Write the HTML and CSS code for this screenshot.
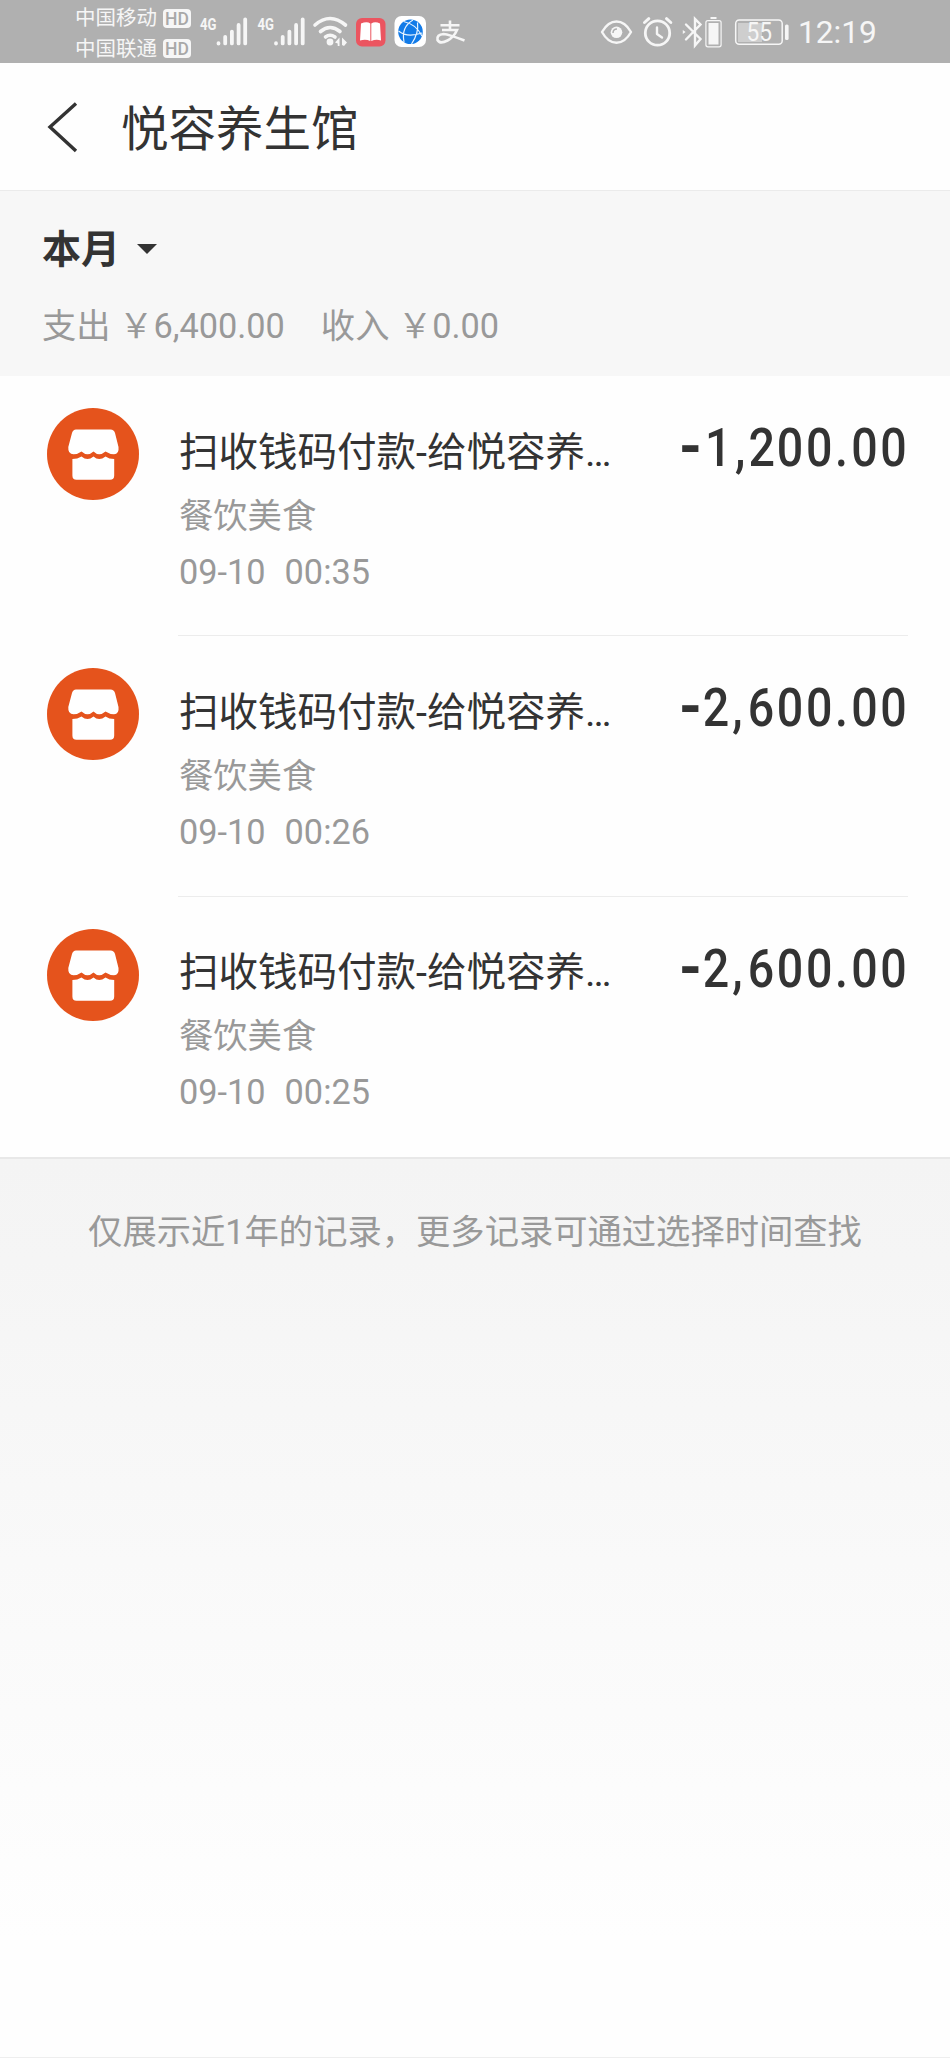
FILE: index.html
```html
<!DOCTYPE html>
<html lang="zh-CN">
<head>
<meta charset="utf-8">
<title>悦容养生馆</title>
<link rel="stylesheet" href="styles.css">
</head>
<body>
<svg class="defs" width="0" height="0">
  <symbol id="signal" viewBox="0 0 48 48">
    <g fill="none" stroke="#f6f6f6" stroke-width="3.8" stroke-linecap="round">
      <path d="M18.500 35.200v.4M25.200 28.800v6.600M31.900 23.600v11.800M38.600 17v18.400M45.200 11.300v24.100"/>
    </g>
  </symbol>
  <symbol id="shop" viewBox="0 0 92 92">
    <circle cx="46" cy="46" r="46" fill="#e5531c"/>
    <path fill="#fff" d="M29 21.500H63.500Q67 21.500 68 25L71.500 39Q72.300 46.200 67 46.200Q62.500 46.200 58.500 43.500Q52 49 46.500 43.500Q40.500 49 34.500 43.500Q31 46.200 26.500 46.200Q20.800 46.200 21.300 39L25 25Q26 21.500 29 21.500Z"/>
    <path fill="#fff" d="M25.400 51Q30.500 51 34.500 48.500Q40.500 53.500 46.500 48.500Q52 53.500 58.500 48.500Q62 51 67.200 51V67.500Q67.200 71.800 63 71.800H29.500Q25.400 71.800 25.400 67.500Z"/>
  </symbol>
</svg>

<header class="status">
  <div class="carriers">
    <div class="carrier">中国移动<span class="hd">HD</span></div>
    <div class="carrier">中国联通<span class="hd">HD</span></div>
  </div>
  <svg class="status-left" width="270" height="63" viewBox="200 0 270 63">
    <use href="#signal" x="200" y="8" width="48" height="48"/>
    <use href="#signal" x="257.500" y="8" width="48" height="48"/>
    <text class="net" x="200" y="29.500" textLength="16.500" lengthAdjust="spacingAndGlyphs">4G</text>
    <text class="net" x="257.500" y="29.500" textLength="16.500" lengthAdjust="spacingAndGlyphs">4G</text>
    <g fill="none" stroke="#f6f6f6" stroke-width="3.600" stroke-linecap="round">
      <path d="M315 25Q330 12 345.500 25M320.500 31.500Q330 23.500 340 31.500M325.500 37Q330 33.500 335 37"/>
    </g>
    <circle cx="330" cy="42" r="3.400" fill="#f6f6f6"/>
    <path fill="#f6f6f6" d="M335 42.500l4.500-5v8.500h-1.800v-2.500zM342 37.500l5 5-3 3.500-2-1z"/>
    <rect x="356" y="18" width="29.500" height="28.500" rx="6" fill="#eb5560"/>
    <path fill="#fff" d="M361 23.500Q367 21 370.300 23.500V41Q366 39 360 40.500ZM371.300 23.500Q375 21 380 23.500L381 40.500Q376 39 371.300 41Z"/>
    <rect x="394.500" y="16" width="31.500" height="31" rx="7" fill="#fff"/>
    <circle cx="410.500" cy="31.700" r="12.300" fill="#127be8"/>
    <g fill="none" stroke="#e8f4ff" stroke-width="1.200"><path d="M403.500 21.500Q416 24 422 36M413 20Q401 27 404 42M398.500 31Q407 38 422 33M417.500 22.500Q419 33 411.500 44"/></g>
    <g fill="none" stroke="#f6f6f6" stroke-width="2.600"><path d="M440.500 25.200h19M450 20.500v9.500M442 30h15Q454 37 447.500 40.500Q440 44.500 437.500 40Q436.500 34.500 443.500 34Q449 34.500 464.500 40.500"/></g>
  </svg>
  <svg class="status-right" width="200" height="63" viewBox="596 0 200 63">
    <g fill="none" stroke="#f6f6f6" stroke-width="2.400" stroke-linejoin="round" stroke-linecap="round">
      <path d="M602 32Q608 21.500 616.500 21.500Q625 21.500 631 32Q625 42.800 616.500 42.800Q608 42.800 602 32Z"/>
      <circle cx="657.500" cy="33" r="12.200" stroke-width="2.800"/>
      <path d="M657 27.500v6.500l5 3.500"/>
      <path stroke-width="3" d="M644.500 22.500l4.300-3.800M666.500 18.700l4.300 3.800"/>
      <path stroke-linejoin="miter" d="M686 24.500l14.500 14.500-5.500 6.500V19l5.500 5.500L686 39.500"/>
    </g>
    <circle cx="616.500" cy="32.300" r="5.800" fill="#f6f6f6"/>
    <path d="M613 33Q613 29 617 29" fill="none" stroke="#b0b0b0" stroke-width="1.500"/>
    <path fill="#f6f6f6" d="M682.800 30l2.800 2-2.800 2zM710.500 17h6v2h-6zM708.500 23h10v21.500h-10z"/>
    <rect x="705.900" y="20.600" width="15.200" height="26.200" rx="2" fill="none" stroke="#f6f6f6" stroke-width="1.200"/>
    <rect x="738" y="23" width="24" height="19" fill="#cecece"/>
    <rect x="735.700" y="20" width="46.500" height="24.300" rx="3.500" fill="none" stroke="#f6f6f6" stroke-width="1.500"/>
    <rect x="785" y="24.500" width="3.600" height="15.500" rx="1.500" fill="#f6f6f6"/>
    <text class="battery" x="746.500" y="40.500" textLength="25.500" lengthAdjust="spacingAndGlyphs">55</text>
  </svg>
  <time class="clock">12:19</time>
</header>

<nav class="nav">
  <svg width="34" height="54" viewBox="0 0 34 54"><path d="M32 3.500L6 27l26 24" fill="none" stroke="#333" stroke-width="3.400"/></svg>
  <h1 class="nav-title">悦容养生馆</h1>
</nav>

<section class="summary">
  <div class="month">本月<svg width="20" height="10" viewBox="0 0 20 10"><path d="M0 0h20L10 10z" fill="#333"/></svg></div>
  <div class="totals"><span>支出 ￥6,400.00</span><span>收入 ￥0.00</span></div>
</section>

<main class="list">
  <article class="item">
    <svg class="shop" width="92" height="92"><use href="#shop"/></svg>
    <div class="body">
      <div class="info"><h2>扫收钱码付款-给悦容养…</h2><p>餐饮美食</p><p class="date">09-10&nbsp; 00:35</p></div>
      <svg class="amount" width="230" height="90"><text transform="scale(.87 1)" y="57" x="2 31 65.500 81.100 113.600 147.100 180.500 199.100 232.500"><tspan class="minus" y="62">-</tspan><tspan y="57">1,200.00</tspan></text></svg>
    </div>
  </article>
  <article class="item">
    <svg class="shop" width="92" height="92"><use href="#shop"/></svg>
    <div class="body">
      <div class="info"><h2>扫收钱码付款-给悦容养…</h2><p>餐饮美食</p><p class="date">09-10&nbsp; 00:26</p></div>
      <svg class="amount" width="230" height="90"><text transform="scale(.87 1)" y="57" x="2 28.500 62.500 80.200 113.600 147.100 180.500 199.100 232.500"><tspan class="minus" y="62">-</tspan><tspan y="57">2,600.00</tspan></text></svg>
    </div>
  </article>
  <article class="item">
    <svg class="shop" width="92" height="92"><use href="#shop"/></svg>
    <div class="body">
      <div class="info"><h2>扫收钱码付款-给悦容养…</h2><p>餐饮美食</p><p class="date">09-10&nbsp; 00:25</p></div>
      <svg class="amount" width="230" height="90"><text transform="scale(.87 1)" y="57" x="2 28.500 62.500 80.200 113.600 147.100 180.500 199.100 232.500"><tspan class="minus" y="62">-</tspan><tspan y="57">2,600.00</tspan></text></svg>
    </div>
  </article>
</main>

<footer class="note">仅展示近1年的记录，更多记录可通过选择时间查找</footer>
</body>
</html>
```
FILE: styles.css
```css
* { box-sizing: border-box; margin: 0; padding: 0; }
body {
  width: 950px; height: 2058px; overflow: hidden;
  display: flex; flex-direction: column;
  font-family: Roboto, "Noto Sans CJK SC", sans-serif;
  color: #333; background: #fefefe;
}
svg { display: block; flex: none; overflow: visible; }
.defs { position: absolute; }

.status { height: 63px; flex: none; display: flex; padding-left: 75px; background: #b0b0b0; color: #f6f6f6; }
.carriers { width: 125px; padding-top: 3px; }
.carrier { height: 30.500px; display: flex; align-items: center; font-size: 20.500px; line-height: 30px; white-space: nowrap; }
.hd {
  width: 28px; height: 19px; margin-left: 6px; border-radius: 4px; flex: none;
  background: #f6f6f6; color: #a8a8a8; font-size: 17.500px; line-height: 20px; font-weight: 500; text-align: center;
}
.status-left { margin-right: 126px; }
.net { font: bold 16.500px Roboto, sans-serif; fill: #f6f6f6; }
.battery { font: 25px Roboto, sans-serif; fill: #f6f6f6; }
.clock { font-size: 31.700px; line-height: 66px; margin-left: 2px; }

.nav { height: 127px; flex: none; display: flex; align-items: center; padding-left: 44px; gap: 43px; }
.nav-title { font-size: 47.500px; font-weight: 400; line-height: 70px; padding-top: 6px; }

.summary { height: 186px; flex: none; padding: 31px 43px 0 42px; background: #f7f7f7; border-top: 1px solid #ebebeb; }
.month { display: flex; align-items: center; gap: 17px; font-size: 39px; font-weight: 700; line-height: 56px; }
.month svg { margin-top: -2px; }
.totals { display: flex; gap: 36px; margin-top: 23px; font-size: 34.300px; line-height: 50px; color: #999; }

.list { height: 781px; flex: none; display: flex; flex-direction: column; }
.item { flex: 1; display: flex; padding: 0 42px 0 47px; gap: 39px; }
.shop { margin-top: 32px; }
.body { flex: 1; display: flex; justify-content: space-between; border-bottom: 1px solid #ececec; }
.item:last-child .body { border-bottom: 0; }
.info { padding: 46.500px 0 0 1px; white-space: nowrap; }
.info h2 { font-size: 39.500px; font-weight: 400; line-height: 60px; }
.info p { font-size: 34.300px; line-height: 50px; margin-top: 8px; color: #999; }
.info .date { margin-top: 6px; word-spacing: 1px; }
.amount text { font: 500 53.500px Roboto, sans-serif; fill: #333; }
.amount .minus { font-size: 72px; }
.amount { margin-top: 33px; }

.note {
  flex: 1; padding-top: 48px; border-top: 2px solid #e8e8e8; border-bottom: 1px solid #eee; text-align: center;
  font-size: 34.300px; line-height: 50px; color: #999;
  background: linear-gradient(#f4f4f4 0, #f5f5f5 100px, #fefefe 780px);
}
```
